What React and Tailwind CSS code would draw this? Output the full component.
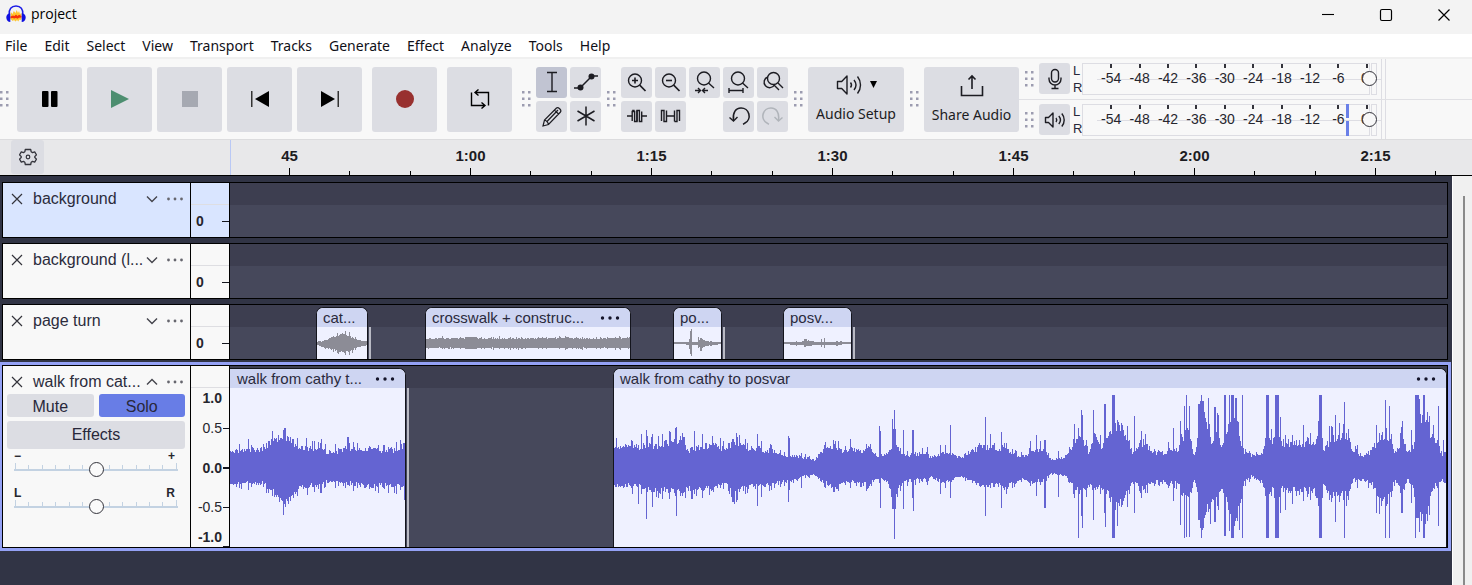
import React from "react";

/* ---------- waveform data: [x, up, down] envelopes and [x, up, down, width] peaks ---------- */

const WALK_A = {
  start: 230,
  end: 405,
  base: [
    [230, 15, 16], [245, 16, 14], [262, 18, 15], [270, 24, 21], [278, 27, 29], [285, 31, 34],
    [292, 25, 27], [300, 19, 20], [310, 18, 17], [320, 17, 17], [328, 14, 13], [340, 16, 14],
    [355, 17, 16], [370, 17, 18], [385, 16, 17], [395, 17, 17], [405, 22, 22],
  ],
  peaks: [
    [248, 28, 22, 1], [284, 39, 36, 2], [285, 38, 39, 1], [306, 29, 20, 1], [321, 28, 19, 1],
    [307, 20, 27, 1], [320, 20, 25, 2], [335, 23, 16, 1], [347, 30, 17, 2], [378, 22, 25, 1], [404, 24, 32, 1],
  ],
};

const WALK_B = {
  start: 613,
  end: 1448,
  base: [
    [613, 20, 17], [633, 19, 18], [645, 21, 19], [655, 20, 24], [665, 23, 21], [675, 26, 24],
    [682, 22, 22], [688, 16, 20], [700, 20, 20], [712, 21, 20], [724, 18, 15], [732, 25, 29],
    [740, 20, 19], [748, 18, 18], [757, 19, 19], [764, 14, 17], [770, 16, 15], [780, 11, 14],
    [792, 11, 13], [800, 10, 9], [813, 7, 7], [823, 17, 15], [835, 19, 19], [843, 14, 13],
    [850, 17, 14], [860, 15, 17], [868, 16, 15], [875, 11, 10], [882, 12, 12], [886, 12, 13],
    [890, 18, 26], [896, 20, 26], [900, 11, 13], [910, 10, 12], [920, 13, 12], [930, 9, 9],
    [940, 13, 14], [950, 12, 12], [960, 9, 8], [970, 16, 13], [978, 19, 16], [988, 20, 17],
    [996, 18, 16], [1004, 20, 20], [1012, 12, 13], [1020, 10, 11], [1030, 14, 13],
    [1040, 18, 13], [1050, 7, 6], [1063, 9, 7], [1070, 20, 16], [1080, 32, 26], [1087, 14, 17],
    [1093, 30, 20], [1100, 20, 18], [1108, 33, 28], [1113, 42, 42], [1120, 35, 30], [1128, 26, 24],
    [1131, 12, 13], [1142, 24, 20], [1155, 13, 13], [1167, 15, 15], [1176, 14, 14], [1183, 32, 28],
    [1188, 34, 30], [1193, 10, 10], [1198, 34, 34], [1203, 50, 50], [1210, 26, 30], [1216, 36, 34],
    [1220, 20, 18], [1226, 40, 34], [1230, 52, 52], [1236, 50, 48], [1240, 22, 28], [1243, 15, 13], [1250, 11, 8],
    [1261, 12, 14], [1265, 33, 30], [1271, 24, 20], [1276, 36, 36], [1281, 20, 20], [1290, 22, 20],
    [1313, 22, 22], [1318, 36, 35], [1322, 16, 16], [1330, 28, 24], [1338, 28, 26], [1346, 30, 26],
    [1352, 15, 11], [1363, 11, 12], [1370, 15, 15], [1377, 28, 26], [1385, 30, 34], [1390, 24, 24],
    [1393, 12, 12], [1402, 28, 24], [1406, 13, 11], [1412, 20, 20], [1416, 46, 50], [1424, 46, 52],
    [1430, 30, 22], [1438, 18, 13], [1441, 12, 11], [1448, 23, 21],
  ],
  peaks: [
    [637, 22, 36, 1], [640, 33, 20, 1], [645, 37, 51, 1], [651, 33, 39, 1], [657, 31, 30, 1],
    [669, 35, 24, 1], [674, 39, 28, 2], [675, 40, 48, 1], [682, 30, 24, 2], [690, 20, 31, 2],
    [693, 36, 26, 1], [701, 33, 30, 1], [711, 31, 22, 1], [731, 28, 34, 2], [733, 25, 36, 1],
    [756, 33, 38, 1], [760, 26, 29, 1], [769, 23, 18, 1], [787, 31, 34, 1], [788, 29, 22, 1],
    [800, 14, 20, 1], [834, 26, 19, 1], [849, 28, 20, 1], [878, 41, 15, 1], [879, 36, 40, 1],
    [891, 48, 41, 1], [892, 38, 41, 3], [893, 57, 71, 1], [902, 37, 41, 1], [911, 37, 30, 2],
    [912, 37, 43, 1], [921, 19, 14, 1], [926, 20, 17, 1], [939, 22, 26, 1], [944, 22, 20, 1],
    [949, 42, 30, 1], [984, 50, 48, 1], [989, 33, 20, 1], [1000, 35, 40, 1], [1005, 24, 26, 1],
    [1029, 26, 18, 1], [1035, 32, 28, 1], [1043, 27, 40, 2], [1057, 16, 29, 1],
    [1073, 43, 30, 1], [1077, 39, 70, 1], [1080, 57, 48, 1], [1081, 52, 60, 1], [1092, 57, 52, 1],
    [1103, 63, 45, 2], [1104, 40, 59, 1], [1111, 72, 70, 3], [1116, 46, 58, 1], [1121, 42, 37, 1],
    [1126, 41, 39, 1], [1133, 51, 45, 1], [1140, 36, 30, 1], [1167, 25, 20, 1], [1172, 39, 33, 1],
    [1179, 46, 57, 1], [1183, 61, 70, 1], [1185, 72, 69, 1], [1188, 61, 69, 1],
    [1197, 63, 52, 2], [1199, 66, 60, 4], [1200, 72, 70, 1], [1207, 69, 44, 1], [1209, 30, 56, 1],
    [1213, 60, 54, 2], [1217, 52, 42, 1], [1223, 72, 68, 2], [1228, 72, 62, 1], [1230, 72, 70, 3],
    [1234, 69, 50, 2], [1238, 30, 62, 1], [1241, 72, 70, 1], [1265, 72, 70, 3], [1274, 72, 70, 4],
    [1279, 50, 45, 1], [1284, 32, 42, 1], [1291, 27, 36, 1], [1302, 42, 33, 1], [1309, 34, 32, 1],
    [1318, 72, 70, 3], [1328, 41, 32, 1], [1334, 52, 54, 1], [1338, 44, 34, 1], [1343, 65, 70, 1],
    [1347, 38, 32, 1], [1356, 22, 20, 1], [1375, 42, 45, 1], [1378, 33, 46, 1], [1384, 67, 70, 1],
    [1388, 61, 70, 1], [1400, 40, 45, 2], [1401, 46, 40, 1], [1410, 37, 35, 1], [1414, 72, 70, 1],
    [1415, 72, 50, 3], [1422, 72, 70, 2], [1423, 72, 68, 1], [1432, 42, 20, 1], [1437, 61, 58, 1],
    [1442, 27, 14, 1],
  ],
};

const CAT = {
  start: 316, end: 368,
  base: [[316, 1, 1], [322, 2, 3], [330, 5, 5], [336, 7, 7], [344, 9, 8], [350, 6, 7], [356, 3, 3], [368, 1, 1]],
  peaks: [[339, 9, 7, 1], [344, 12, 11, 1], [337, 7, 10, 1]],
};
const CROSSWALK = {
  start: 426, end: 631,
  base: [[426, 4, 4], [470, 5, 4], [500, 4, 4], [560, 5, 4], [590, 4, 4], [631, 5, 4]],
  peaks: [[442, 7, 5, 1], [465, 6, 5, 12], [499, 7, 5, 1], [620, 6, 6, 1]],
};
const POS_A = {
  start: 674, end: 722,
  base: [[674, 1, 0], [697, 1, 1], [700, 4, 4], [705, 2, 2], [712, 1, 1], [722, 1, 0]],
  peaks: [[689, 4, 5, 1], [690, 12, 10, 1], [691, 14, 12, 1], [698, 6, 4, 1], [700, 5, 7, 2]],
};
const POS_B = {
  start: 784, end: 852,
  base: [[784, 1, 0], [794, 1, 1], [800, 1, 1], [805, 3, 2], [815, 1, 1], [828, 1, 1], [852, 1, 0]],
  peaks: [[796, 2, 2, 1], [804, 4, 3, 2], [821, 4, 3, 1], [824, 5, 4, 1], [836, 2, 2, 2], [840, 2, 1, 2]],
};

function wavePath({ start, end, base, peaks }, mid) {
  const parts = [];
  let k = 0;
  let seed = start * 7 + 13;
  const rand = () => {
    seed = (seed * 1103515245 + 12345) % 2147483648;
    return seed / 2147483648;
  };
  for (let x = start; x < end; x++) {
    while (k < base.length - 2 && base[k + 1][0] <= x) k++;
    const [xa, ua, da] = base[k];
    const [xb, ub, db] = base[k + 1];
    const t = (x - xa) / (xb - xa);
    const burst = rand() > 0.84 ? 1.28 : 1;
    let up = (ua + (ub - ua) * t) * (0.86 + rand() * 0.32) * burst;
    let dn = (da + (db - da) * t) * (0.86 + rand() * 0.3) * burst;
    for (const [px, pu, pd, w] of peaks) {
      if (x >= px && x < px + w) {
        up = Math.max(up, pu);
        dn = Math.max(dn, pd);
      }
    }
    up = Math.round(up);
    dn = Math.round(dn) + 1;
    parts.push(`M${x - start} ${mid - up}h1v${up + dn}h-1z`);
  }
  return parts.join("");
}

/* ---------- icons ---------- */

const Svg = ({ w = 24, h = w, children, className = "" }) => (
  <svg width={w} height={h} viewBox={`0 0 ${w} ${h}`} fill="none" stroke="currentColor" strokeWidth="1.4" className={`shrink-0 ${className}`} aria-hidden="true">
    {children}
  </svg>
);

const Logo = () => (
  <svg width="20" height="18" viewBox="0 0 20 18" aria-hidden="true">
    <path d="M4.500 14l.3-7 1.700 2 1.300-3L9.500 8l1.200-3 1.300 3 1-2 1 3 1.500-1v6l-1 1-1.200-.5-1 2-1.300-1.500-1.500 1.500-1.500-1.500-1.200 1z" fill="#ffc52e" />
    <path d="M4.500 11.500l2.500-1 1.500.6 1.500-1.600 1.500 1.500 1.500-1.200 2.500 1.200v1.400l-2.500.4-1.500.9-1.500-.8-1.800.6-1.500-.6-2.200.4z" fill="#f5320a" />
    <path d="M3.200 10C2.500 4 5.500 1 10 1s7.500 3 6.800 9" fill="none" stroke="#1c1ce6" strokeWidth="1.500" />
    <path d="M4.300 8.500C2 8 .2 10 .3 12.500.3 15 2 17 4.300 17z" fill="#1010e0" />
    <path d="M15.700 8.500C18 8 19.800 10 19.700 12.500c0 2.500-1.700 4.500-4 4.500z" fill="#1010e0" />
  </svg>
);

const Grip = () => (
  <svg width="9" height="16" viewBox="0 0 9 16" fill="#9c9cb0" className="shrink-0" aria-hidden="true">
    {[0, 6.5, 13].map((y) => (
      <g key={y}>
        <rect x="0" y={y} width="2.500" height="2.500" />
        <rect x="6" y={y} width="2.500" height="2.500" />
      </g>
    ))}
  </svg>
);

const Speaker = () => (
  <Svg w={26} h={22}>
    <path d="M1.500 7.500h4.200L11 2v18l-5.300-5.500H1.500z" strokeLinejoin="round" />
    <path d="M14.500 8.500c1.200 1.500 1.200 3.500 0 5M18 6c2.400 3 2.400 7 0 10M21.500 2.500c4 5 4 12 0 17" />
  </Svg>
);

const SpeakerSmall = () => (
  <Svg w={22} h={18}>
    <path d="M1.500 6.500h3L9 2v14l-4.500-4.500H1.500z" strokeLinejoin="round" />
    <path d="M12 7c.9 1.200.9 2.800 0 4M14.800 5c2 2.400 2 5.600 0 8M17.800 2.500c3.200 3.800 3.200 9.200 0 13" />
  </Svg>
);

const Mic = () => (
  <Svg w={16} h={22}>
    <rect x="4.500" y="1.500" width="7" height="12.500" rx="3.500" />
    <path d="M2 9.500v1.500a6 6 0 0 0 12 0V9.500M8 17v3.500M4.500 20.500h7" />
  </Svg>
);

const Lens = ({ children }) => (
  <Svg w={24}>
    <circle cx="10" cy="10.500" r="6.500" />
    <path d="M14.700 15.200l5.800 5.800" strokeWidth="1.700" />
    {children}
  </Svg>
);

const Undo = ({ flip }) => (
  <Svg w={24} className={flip ? "-scale-x-100" : ""}>
    <path d="M6.500 16C5.500 9 8.500 4 14 4a8 8 0 0 1 4 15c-.6.6-1.200.9-2 1.200" strokeWidth="1.600" />
    <path d="M2.500 13.500l4 3.500 4-4" />
  </Svg>
);

const Chevron = ({ open }) => (
  <Svg w={14} h={8}>
    <path d={open ? "M2 6.500l5-5 5 5" : "M2 1.500l5 5 5-5"} />
  </Svg>
);

const Dots = ({ dark }) => (
  <svg width="20" height="4" viewBox="0 0 20 4" className="shrink-0" fill={dark ? "#14142a" : "#66666e"} aria-hidden="true">
    <circle cx={dark ? 2.5 : 3.5} cy="2" r={dark ? 1.7 : 1.4} />
    <circle cx="10" cy="2" r={dark ? 1.7 : 1.4} />
    <circle cx={dark ? 17.5 : 16.5} cy="2" r={dark ? 1.7 : 1.4} />
  </svg>
);

/* ---------- toolbar pieces ---------- */

const BigButton = ({ label, className = "", children }) => (
  <button type="button" aria-label={label} className={`flex h-[65px] w-[65px] shrink-0 items-center justify-center rounded-[3px] bg-[#dcdde3] ${className}`}>
    {children}
  </button>
);

const SmallButton = ({ label, active, faded, children }) => (
  <button
    type="button"
    aria-label={label}
    className={`flex h-[31px] w-[31px] shrink-0 items-center justify-center rounded-[3px] ${active ? "bg-[#c1c4d2]" : "bg-[#dcdde3]"} ${faded ? "text-[#b0b4ba]" : "text-[#1c1c22]"}`}
  >
    {children}
  </button>
);

const DB = ["-54", "-48", "-42", "-36", "-30", "-24", "-18", "-12", "-6", "0\u00a0"];

const Meter = ({ label, icon, peak }) => (
  <div className="flex h-10 items-center pb-px pl-[6px]">
    <Grip />
    <button type="button" aria-label={label} className="ml-[5px] flex h-[31px] w-[31px] shrink-0 items-center justify-center rounded-[3px] bg-[#dcdde3] text-[#1c1c22]">
      {icon}
    </button>
    <div className="ml-[3px] flex w-[9px] flex-col text-[13px] leading-[17px] text-[#28283a]">
      <span>L</span>
      <span>R</span>
    </div>
    <div className="relative flex h-8 w-[295px] shrink-0">
      <div className="w-[288px] border border-[#dddde3]">
        <div className="-mr-[12px] ml-[14px] grid grid-cols-10 bg-[linear-gradient(#dddde3,#dddde3)] bg-[length:100%_1px] bg-[position:0_15px] bg-no-repeat">
          {DB.map((d) => (
            <span key={d} className="flex flex-col items-center text-sm leading-5 text-[#26262e]">
              <i className="h-1 w-[2px] bg-[#33333b]" />
              {d}
            </span>
          ))}
        </div>
      </div>
      <div className="ml-px w-[6px] border border-[#dddde3]" />
      {peak && (
        <div className="absolute inset-y-0 right-[28px] flex w-[3px] flex-col gap-[3px]">
          <i className="flex-1 bg-[#6a80e8]" />
          <i className="flex-1 bg-[#6a80e8]" />
        </div>
      )}
      <input
        type="range"
        aria-label={`${label} level`}
        defaultValue="100"
        className="absolute inset-y-0 left-0 w-full appearance-none bg-transparent [&::-webkit-slider-thumb]:h-[15px] [&::-webkit-slider-thumb]:w-[15px] [&::-webkit-slider-thumb]:appearance-none [&::-webkit-slider-thumb]:rounded-full [&::-webkit-slider-thumb]:border [&::-webkit-slider-thumb]:border-[#33333b] [&::-webkit-slider-thumb]:bg-[#f8f8f8]"
      />
    </div>
  </div>
);

/* ---------- track pieces ---------- */

const Clip = ({ title, wave, height, className, tail, menu, muted, openLeft, titleClass = "" }) => (
  <div className={`absolute bottom-0 top-[2px] ${className}`}>
    <div className={`flex h-full flex-col overflow-hidden border-x border-t border-[#14151d] ${openLeft ? "rounded-tr-[7px] border-l-0" : "rounded-t-[7px]"} bg-[#eff1ff]`}>
      <div className="flex h-[19px] shrink-0 items-center bg-[#ced5f2] pl-[6px] pr-[10px] text-[15px] leading-[19px] text-[#2a2a3c]">
        <span className={`whitespace-nowrap ${titleClass}`}>{title}</span>
        {menu && (
          <button type="button" aria-label="Clip menu" className="ml-auto">
            <Dots dark />
          </button>
        )}
      </div>
      <svg width={wave.end - wave.start} height={height} className="shrink-0" fill={muted ? "#8c8c96" : "#6464d2"} shapeRendering="crispEdges" aria-hidden="true">
        <path d={wavePath(wave, Math.floor(height / 2))} />
      </svg>
    </div>
    {tail && <i className="absolute -right-[3px] bottom-0 top-[20px] w-[2px] bg-[#b9bac4]" />}
  </div>
);

const Scale = ({ tall }) => (
  <div className="flex w-10 shrink-0 flex-col border-x border-black text-sm text-[#26262e]">
    <div className="h-[22px] shrink-0 border-b border-[#dedee2]" />
    {tall ? (
      <div className="flex flex-1 flex-col">
        {[["1.0", 0], ["0.5", 1], ["0.0", 1], ["-0.5", 1], ["-1.0", 2]].map(([v, tick], i) => (
          <div key={v} className={`flex items-center justify-end ${i === 0 ? "h-5" : i === 4 ? "flex-1" : i === 3 ? "h-[38px]" : "h-10"} ${i % 2 === 0 ? "font-bold" : ""}`}>
            <span>{v}</span>
            <i className={`ml-px w-[6px] ${tick === 0 ? "" : i === 2 ? "h-[2px] bg-[#14151d]" : "h-px bg-[#14151d]"} ${tick === 2 ? "self-end" : ""}`} />
          </div>
        ))}
      </div>
    ) : (
      <div className="flex flex-1 items-center justify-between pl-[5px] font-bold">
        <span>0</span>
        <i className="h-px w-[7px] bg-[#14151d]" />
      </div>
    )}
  </div>
);

const TickSlider = ({ label, low, high }) => (
  <div className="pl-[11px] pr-3">
    <div className="flex justify-between text-xs font-bold leading-3 text-[#26262e]">
      <span>{low}</span>
      <span className="pr-[3px]">{high}</span>
    </div>
    <div className="relative h-[15px]">
      <div className="flex h-[9px] items-end justify-between border-b-2 border-[#c3d2e2] px-px">
        {Array.from({ length: 13 }, (_, i) => (
          <i key={i} className={`w-px bg-[#c3d2e2] ${i % 12 === 0 ? "h-[6px]" : "h-1"}`} />
        ))}
      </div>
      <input
        type="range"
        aria-label={label}
        className="absolute inset-0 h-[15px] w-full appearance-none bg-transparent [&::-webkit-slider-thumb]:h-[15px] [&::-webkit-slider-thumb]:w-[15px] [&::-webkit-slider-thumb]:appearance-none [&::-webkit-slider-thumb]:rounded-full [&::-webkit-slider-thumb]:border-[1px] [&::-webkit-slider-thumb]:border-solid [&::-webkit-slider-thumb]:border-[#33333b] [&::-webkit-slider-thumb]:bg-[#fafafa]"
      />
    </div>
  </div>
);

const Track = ({ name, focused, selected, open, controls, children }) => (
  <section className={`flex border border-black ${open ? "h-[183px]" : "h-14"} ${focused ? "shadow-[0_0_0_3px_#94a1f5]" : ""} ${selected ? "bg-[#d9e5ff]" : "bg-[#f8f8f8]"}`}>
    <div className="w-[187px] shrink-0">
      <div className="flex h-[31px] items-center pl-2">
        <button type="button" aria-label="Close track" className="text-[#33333b]">
          <Svg w={12} className="block"><path d="M1 1l10 10M11 1L1 11" strokeWidth="1.200" /></Svg>
        </button>
        <span className="ml-[10px] w-[112px] whitespace-nowrap text-base leading-5 text-[#2c2c3c]">{name}</span>
        <button type="button" aria-label="Collapse track" className="text-[#44444c]">
          <Chevron open={open} />
        </button>
        <button type="button" aria-label="Track menu" className="ml-[6px]">
          <Dots />
        </button>
      </div>
      {controls}
    </div>
    <Scale tall={open} />
    <div className="relative min-w-0 flex-1 overflow-hidden bg-[#46485b]">
      <div className="h-[22px] bg-[#3d3e50]" />
      {children}
    </div>
  </section>
);

const MENUS = ["File", "Edit", "Select", "View", "Transport", "Tracks", "Generate", "Effect", "Analyze", "Tools", "Help"];
const TIMES = ["45", "1:00", "1:15", "1:30", "1:45", "2:00", "2:15"];

export default function App() {
  return (
    <div className="flex min-h-screen flex-col overflow-hidden bg-[#f8f8f8] font-['Liberation_Sans',Arial,sans-serif]">
      <header className="flex h-[34px] items-center bg-[#f3f3f3] pb-[6px] pl-[6px] pr-[18px]">
        <Logo />
        <h1 className="ml-[5px] font-['Open_Sans','Noto_Sans',sans-serif] text-sm leading-7 text-black">project</h1>
        <div className="ml-auto flex items-center gap-[38px] text-black">
          <button type="button" aria-label="Minimize"><Svg w={20} h={20}><path d="M4 10.500h12" strokeWidth="1.100" /></Svg></button>
          <button type="button" aria-label="Maximize"><Svg w={20} h={20}><rect x="4.500" y="5.500" width="11" height="11" rx="1.500" strokeWidth="1.200" /></Svg></button>
          <button type="button" aria-label="Close"><Svg w={20} h={20}><path d="M4.500 5.500l11 11M15.500 5.500l-11 11" strokeWidth="1.200" /></Svg></button>
        </div>
      </header>

      <nav className="flex h-[25px] items-center gap-[17px] border-b-2 border-[#f0f0f0] bg-white pl-[5px] font-['Noto_Sans',sans-serif] text-sm text-[#101018]">
        {MENUS.map((m) => (
          <button key={m} type="button">{m}</button>
        ))}
      </nav>

      <div className="flex h-[81px] items-stretch border-b border-[#dcdcde]">
        <div className="flex items-center">
          <Grip />
          <div className="ml-2 flex gap-[5px]">
            <BigButton label="Pause">
              <svg width="16" height="16" aria-hidden="true"><rect width="6.500" height="16" rx="1" /><rect x="9" width="6.500" height="16" rx="1" /></svg>
            </BigButton>
            <BigButton label="Play">
              <svg width="18" height="18" fill="#4d8e70" aria-hidden="true"><path d="M0 0l18 9-18 9z" /></svg>
            </BigButton>
            <BigButton label="Stop">
              <svg width="16" height="16" fill="#a6a9b2" aria-hidden="true"><rect width="16" height="16" /></svg>
            </BigButton>
            <BigButton label="Skip to start">
              <svg width="18" height="16" aria-hidden="true"><rect width="1.500" height="16" fill="#333" /><path d="M18 0v16L4 8z" /></svg>
            </BigButton>
            <BigButton label="Skip to end">
              <svg width="18" height="16" aria-hidden="true"><rect x="16.500" width="1.500" height="16" fill="#333" /><path d="M0 0v16l14-8z" /></svg>
            </BigButton>
            <BigButton label="Record" className="ml-[5px]">
              <svg width="18" height="18" fill="#98302f" aria-hidden="true"><circle cx="9" cy="9" r="9" /></svg>
            </BigButton>
            <BigButton label="Loop" className="ml-[5px]">
              <Svg w={20} h={20}>
                <path d="M1.500 3.500v13h13M11.500 13.500l3.500 3-3.500 3M18.500 16.500v-13h-13M8.500.5L5 3.500l3.500 3" />
              </Svg>
            </BigButton>
          </div>
        </div>

        <div className="ml-[10px] flex items-center gap-[5px]">
          <Grip />
          <div className="grid grid-cols-2 gap-[3px]">
            <SmallButton label="Selection tool" active>
              <Svg w={16} h={24}><path d="M3 2.500h10M3 21.500h10M8 2.500v19" /></Svg>
            </SmallButton>
            <SmallButton label="Envelope tool">
              <Svg w={26} h={22}><path d="M1 17h6l12-12h6" /><circle cx="7.500" cy="16.500" r="3" fill="currentColor" stroke="none" /><circle cx="18.500" cy="5.500" r="3" fill="currentColor" stroke="none" /></Svg>
            </SmallButton>
            <SmallButton label="Draw tool">
              <Svg w={22}><path d="M2 21l1.500-6L15.500 3c1.500-1.500 5.500 2 4 4L7.500 19.500zM3.500 15c2 .5 3.500 2 4 4.500M13.500 5l4 4M5.500 17L17 5" strokeWidth="1.200" /></Svg>
            </SmallButton>
            <SmallButton label="Multi-tool">
              <Svg w={22}><path d="M11 1.500v19M2.500 6l17 10M19.500 6l-17 10" strokeWidth="1.500" /></Svg>
            </SmallButton>
          </div>
        </div>

        <div className="ml-[6px] flex items-center gap-[5px]">
          <Grip />
          <div className="grid grid-cols-5 gap-[3px]">
            <SmallButton label="Zoom in"><Lens><path d="M7 10.500h6M10 7.500v6" strokeWidth="1.600" /></Lens></SmallButton>
            <SmallButton label="Zoom out"><Lens><path d="M7 10.500h6" strokeWidth="1.600" /></Lens></SmallButton>
            <SmallButton label="Fit selection">
              <Svg w={24}><circle cx="11" cy="8.500" r="6.500" /><path d="M15.500 13l5.500 5M2 20.500h5.500M5 18l2.500 2.500L5 23M15 20.500H9.500M12 18l-2.500 2.500L12 23" /></Svg>
            </SmallButton>
            <SmallButton label="Fit project">
              <Svg w={24}><circle cx="11" cy="8.500" r="6.500" /><path d="M15.500 13l5.500 5M2 20.500h14M2 18v5M16 18v5" /></Svg>
            </SmallButton>
            <SmallButton label="Zoom toggle">
              <Svg w={24}><circle cx="12.500" cy="8.500" r="6" /><path d="M17 13l5 5M6.800 7a5.500 5.500 0 1 0 6.700 7.700M13 15l5 5" /></Svg>
            </SmallButton>
            <SmallButton label="Trim outside">
              <Svg w={20} h={20}><path d="M0 10h5M15 10h5M5.200 15V5.500h2.400v10H10v-11h2.400v11h2.300V5.500" strokeWidth="1.400" /><path d="M7.600 4.500h-2.400M10 15.500v-11" strokeWidth="1.400" /></Svg>
            </SmallButton>
            <SmallButton label="Silence selection">
              <Svg w={22} h={20}><path d="M1.500 15V4.500H4v11h2.500v-11M6.500 10h8M14.500 15.500v-11M14.500 15.500H17v-11h2.500V15" strokeWidth="1.400" /></Svg>
            </SmallButton>
            <span />
            <SmallButton label="Undo"><Undo /></SmallButton>
            <SmallButton label="Redo" faded><Undo flip /></SmallButton>
          </div>
        </div>

        <div className="ml-[6px] flex items-center gap-[5px]">
          <Grip />
          <button type="button" className="flex h-[65px] w-24 flex-col items-center rounded-[3px] bg-[#dcdde3] pt-[7px] text-[#1c1c22]">
            <span className="flex items-center gap-2">
              <Speaker />
              <svg width="7" height="7" aria-hidden="true"><path d="M0 0h7L3.500 7z" /></svg>
            </span>
            <span className="mt-2 font-['Noto_Sans',sans-serif] text-sm leading-5">Audio Setup</span>
          </button>
        </div>

        <div className="ml-[6px] flex items-center gap-[5px]">
          <Grip />
          <button type="button" className="flex h-[65px] w-[95px] flex-col items-center rounded-[3px] bg-[#dcdde3] pt-[7px] text-[#1c1c22]">
            <Svg w={24}><path d="M1.500 12v9.500h21V12M12 15V2M8.500 5.500L12 2l3.500 3.500" strokeWidth="1.600" /></Svg>
            <span className="mt-[7px] font-['Noto_Sans',sans-serif] text-sm leading-5">Share Audio</span>
          </button>
        </div>

        <div className="flex flex-1 flex-col">
          <div className="flex h-[41px] border-b border-[#e0e0e4]">
            <Meter label="Record meter" icon={<Mic />} />
            <i className="ml-1 w-[5px] border-x border-[#dddde3]" />
          </div>
          <div className="flex h-[39px]">
            <Meter label="Playback meter" icon={<SpeakerSmall />} peak />
            <i className="ml-1 w-[5px] border-x border-[#dddde3]" />
          </div>
        </div>
      </div>

      <div className="flex h-9 border-b border-black bg-[#e8e8ea]">
        <div className="w-[230px] shrink-0 pl-[11px]">
          <button type="button" aria-label="Timeline options" className="flex h-[34px] w-[33px] items-center justify-center rounded-[3px] bg-[#dcdde3] text-[#33333b]">
            <Svg w={18}>
              <path d="M6.300 1.500h5.400l.5 2.300 1.300.8 2.200-.7 1.800 3-1.700 1.600v1l1.700 1.600-1.800 3-2.200-.7-1.300.8-.5 2.300H6.300l-.5-2.300-1.300-.8-2.200.7-1.800-3 1.700-1.600v-1L.5 6.900l1.800-3 2.200.7 1.300-.8z" strokeWidth="1.300" strokeLinejoin="round" />
              <circle cx="9" cy="9" r="1.800" strokeWidth="1.200" />
            </Svg>
          </button>
        </div>
        <div className="min-w-0 flex-1 overflow-hidden border-l border-[#b9c8f5]">
          <div className="-ml-8 flex h-full">
            {TIMES.map((t) => (
              <div key={t} className="flex w-[181px] shrink-0 flex-col justify-between text-center text-[15px] font-bold text-[#1c1c22]">
                <span className="pt-[6px] leading-5">{t}</span>
                <span className="grid grid-cols-3 items-end justify-items-center">
                  <i className="h-1 w-px bg-black" />
                  <i className="h-[7px] w-px bg-black" />
                  <i className="h-1 w-px bg-black" />
                </span>
              </div>
            ))}
          </div>
        </div>
      </div>

      <main className="flex flex-1">
        <div className="flex min-w-0 flex-1 flex-col gap-[5px] overflow-hidden bg-[#313445] pb-[37px] pl-[2px] pr-1 pt-[6px]">
          <Track name="background" selected />
          <Track name="background (l..." />
          <Track name="page turn">
            <Clip title="cat..." wave={CAT} height={32} muted tail className="left-[86px] w-[52px]" />
            <Clip title="crosswalk + construc..." wave={CROSSWALK} height={32} muted menu className="left-[195px] w-[206px]" />
            <Clip title="po..." wave={POS_A} height={32} muted tail className="left-[443px] w-[49px]" />
            <Clip title="posv..." wave={POS_B} height={32} muted tail className="left-[553px] w-[69px]" />
          </Track>
          <Track
            name="walk from cat..."
            open
            focused
            controls={
              <div className="-mt-[3px] flex flex-col pl-1 pr-[5px]">
                <div className="flex gap-[5px] text-base leading-[25px] text-[#28283a]">
                  <button type="button" className="h-[23px] flex-1 rounded-[3px] bg-[#dcdde3]">Mute</button>
                  <button type="button" aria-pressed="true" className="h-[23px] flex-1 rounded-[3px] bg-[#687de6]">Solo</button>
                </div>
                <button type="button" className="mt-1 h-7 rounded-[3px] bg-[#dcdde3] text-base leading-7 text-[#28283a]">Effects</button>
                <div className="-ml-1 -mr-[5px] mt-px flex flex-col gap-[10px]">
                  <TickSlider label="Gain" low="−" high="+" />
                  <TickSlider label="Pan" low="L" high="R" />
                </div>
              </div>
            }
          >
            <Clip title="walk from cathy t..." wave={WALK_A} height={159} menu tail openLeft titleClass="pl-px" className="left-0 w-[176px]" />
            <Clip title="walk from cathy to posvar" wave={WALK_B} height={159} menu className="left-[383px] right-0" />
          </Track>
        </div>
        <div className="flex w-5 shrink-0 justify-center border-l border-white bg-[#f0f0f0] pl-[3px] pt-5">
          <i className="w-[2px] bg-[#8a8a8a]" />
        </div>
      </main>
    </div>
  );
}
